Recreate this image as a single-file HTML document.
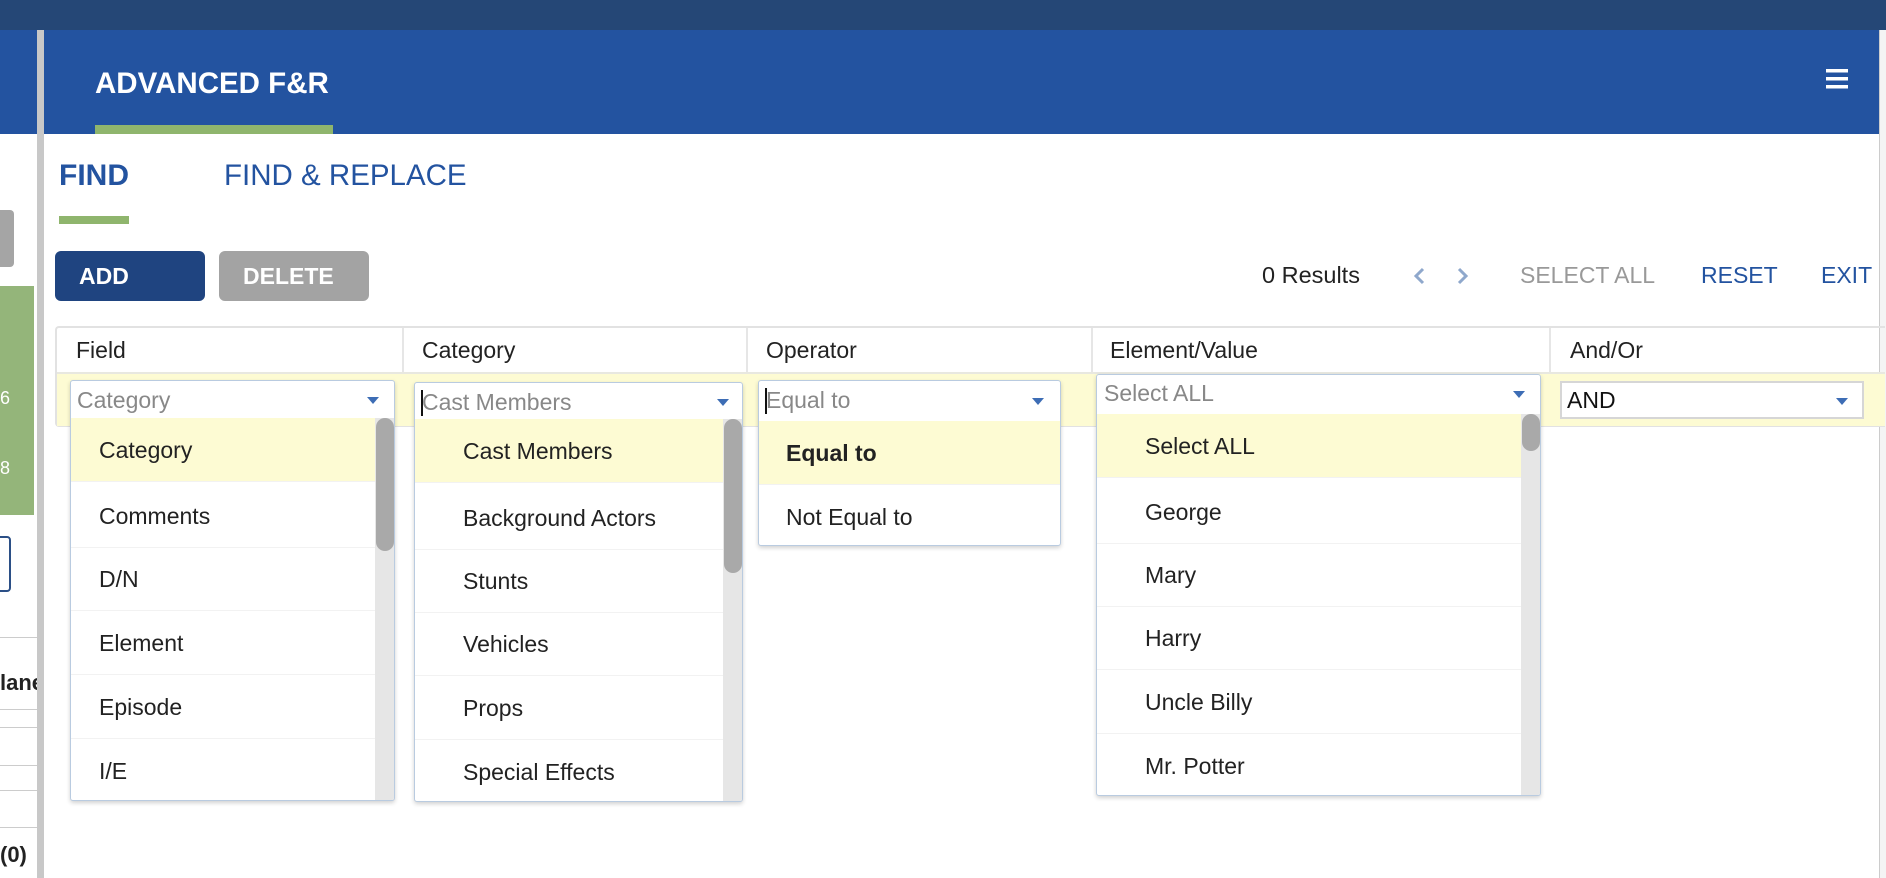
<!DOCTYPE html>
<html><head><meta charset="utf-8"><style>
*{box-sizing:border-box;margin:0;padding:0}
body{width:1886px;height:878px;overflow:hidden;background:#fff;font-family:"Liberation Sans",Arial,sans-serif;position:relative;color:#222}
.a{position:absolute}
.dd{position:absolute;background:#fff;border:1px solid #b9cbe0;border-radius:3px;box-shadow:0 2px 4px rgba(0,0,0,.18);overflow:hidden}
.it{position:absolute;left:0;height:64px;line-height:64px;font-size:23px;color:#222;border-bottom:1px solid #f2f2f2}
.sel{background:#fdfbd3}
.tri{position:absolute;width:0;height:0;border-left:6px solid transparent;border-right:6px solid transparent;border-top:7px solid #3d6db5}
.ph{position:absolute;font-size:23px;color:#888}
.hd{position:absolute;top:337px;font-size:23px;color:#222}
</style></head><body>
<div class="a" style="left:0;top:0;width:1886px;height:30px;background:#254776"></div>
<div class="a" style="left:0;top:30px;width:1879px;height:104px;background:#2353a0"></div>
<!-- left strip -->
<div class="a" style="left:0;top:210px;width:14px;height:57px;background:#a5a5a5;border-radius:0 4px 4px 0"></div>
<div class="a" style="left:0;top:286px;width:34px;height:229px;background:#94b57a"></div>
<div class="a" style="left:0;top:388px;color:#fff;font-size:18px">6</div>
<div class="a" style="left:0;top:458px;color:#fff;font-size:18px">8</div>
<div class="a" style="left:-4px;top:536px;width:15px;height:56px;border:2px solid #2b4f86;border-radius:4px"></div>
<div class="a" style="left:0;top:637px;width:37px;border-top:1px solid #ccc"></div>
<div class="a" style="left:0;top:670px;font-size:22px;font-weight:bold">lane</div>
<div class="a" style="left:0;top:709px;width:37px;border-top:1px solid #ccc"></div>
<div class="a" style="left:0;top:727px;width:37px;border-top:1px solid #ccc"></div>
<div class="a" style="left:0;top:765px;width:37px;border-top:1px solid #ccc"></div>
<div class="a" style="left:0;top:790px;width:37px;border-top:1px solid #ccc"></div>
<div class="a" style="left:0;top:827px;width:37px;border-top:1px solid #ccc"></div>
<div class="a" style="left:0;top:842px;font-size:22px;font-weight:bold">(0)</div>
<div class="a" style="left:37px;top:30px;width:7px;height:848px;background:#c8c8c8"></div>
<!-- right edge -->
<div class="a" style="left:1879px;top:30px;width:7px;height:848px;background:#f4f4f4;border-left:1px solid #ccc"></div>
<!-- header -->
<div class="a" style="left:95px;top:67px;color:#fff;font-size:29.5px;font-weight:bold">ADVANCED F&amp;R</div>
<div class="a" style="left:95px;top:125px;width:238px;height:9px;background:#8fb56d"></div>
<svg class="a" style="left:1826px;top:69px" width="22" height="20"><rect y="0" width="22" height="3.5" fill="#fff"/><rect y="8" width="22" height="3.5" fill="#fff"/><rect y="16" width="22" height="3.5" fill="#fff"/></svg>
<!-- tabs -->
<div class="a" style="left:59px;top:159px;color:#2353a0;font-size:30px;font-weight:bold">FIND</div>
<div class="a" style="left:224px;top:159px;color:#2353a0;font-size:29.5px">FIND &amp; REPLACE</div>
<div class="a" style="left:59px;top:216px;width:70px;height:8px;background:#8fb56d"></div>
<!-- buttons -->
<div class="a" style="left:55px;top:251px;width:150px;height:50px;background:#1f4480;border-radius:6px;color:#fff;font-weight:bold;font-size:23px;line-height:50px;padding-left:24px">ADD</div>
<div class="a" style="left:219px;top:251px;width:150px;height:50px;background:#a3a3a3;border-radius:6px;color:#fff;font-weight:bold;font-size:23px;line-height:50px;padding-left:24px">DELETE</div>
<div class="a" style="left:1262px;top:262px;font-size:23.5px;color:#222">0 Results</div>
<svg class="a" style="left:1411px;top:266px" width="60" height="20"><path d="M12 3 L5 10 L12 17" stroke="#8fa8cc" stroke-width="3" fill="none"/><path d="M48 3 L55 10 L48 17" stroke="#8fa8cc" stroke-width="3" fill="none"/></svg>
<div class="a" style="left:1520px;top:262px;font-size:23px;color:#999">SELECT ALL</div>
<div class="a" style="left:1701px;top:262px;font-size:23px;color:#2353a0">RESET</div>
<div class="a" style="left:1821px;top:262px;font-size:23px;color:#2353a0">EXIT</div>
<!-- table -->
<div class="a" style="left:55px;top:326px;width:1830px;height:101px;border:2px solid #e2e2e2;border-right:none;border-radius:4px 0 0 4px"></div>
<div class="a" style="left:57px;top:372px;width:1828px;height:54px;background:#fdfbd3;border-top:2px solid #e8e8e0"></div>
<div class="a" style="left:402px;top:328px;height:44px;border-left:2px solid #e6e6e6"></div>
<div class="a" style="left:746px;top:328px;height:44px;border-left:2px solid #e6e6e6"></div>
<div class="a" style="left:1091px;top:328px;height:44px;border-left:2px solid #e6e6e6"></div>
<div class="a" style="left:1549px;top:328px;height:44px;border-left:2px solid #e6e6e6"></div>
<div class="hd" style="left:76px">Field</div>
<div class="hd" style="left:422px">Category</div>
<div class="hd" style="left:766px">Operator</div>
<div class="hd" style="left:1110px">Element/Value</div>
<div class="hd" style="left:1570px">And/Or</div>
<!-- AND select -->
<div class="a" style="left:1560px;top:381px;width:304px;height:38px;background:#fff;border:2px solid #d6d6d6"></div>
<div class="a" style="left:1567px;top:387px;font-size:23px;color:#111">AND</div>
<div class="tri" style="left:1836px;top:398px"></div>
<!-- Field dropdown -->
<div class="dd" style="left:70px;top:380px;width:325px;height:421px">
 <div class="ph" style="left:6px;top:6px">Category</div><div class="tri" style="left:296px;top:16px"></div>
 <div class="it sel" style="top:37px;width:306px;padding-left:28px">Category</div>
 <div class="it" style="top:103px;width:306px;padding-left:28px">Comments</div>
 <div class="it" style="top:166px;width:306px;padding-left:28px">D/N</div>
 <div class="it" style="top:230px;width:306px;padding-left:28px">Element</div>
 <div class="it" style="top:294px;width:306px;padding-left:28px">Episode</div>
 <div class="it" style="top:358px;width:306px;padding-left:28px">I/E</div>
 <div class="a" style="left:304px;top:37px;width:20px;height:384px;background:#e6e6e6"></div>
 <div class="a" style="left:305px;top:37px;width:18px;height:133px;background:#a9a9a9;border-radius:9px"></div>
</div>
<!-- Category dropdown -->
<div class="dd" style="left:414px;top:382px;width:329px;height:420px">
 <div class="a" style="left:6px;top:7px;width:2px;height:26px;background:#111"></div>
 <div class="ph" style="left:7px;top:6px">Cast Members</div><div class="tri" style="left:302px;top:16px"></div>
 <div class="it sel" style="top:36px;width:308px;padding-left:48px">Cast Members</div>
 <div class="it" style="top:103px;width:308px;padding-left:48px">Background Actors</div>
 <div class="it" style="top:166px;width:308px;padding-left:48px">Stunts</div>
 <div class="it" style="top:229px;width:308px;padding-left:48px">Vehicles</div>
 <div class="it" style="top:293px;width:308px;padding-left:48px">Props</div>
 <div class="it" style="top:357px;width:308px;padding-left:48px">Special Effects</div>
 <div class="a" style="left:308px;top:36px;width:20px;height:384px;background:#e6e6e6"></div>
 <div class="a" style="left:309px;top:36px;width:18px;height:154px;background:#a9a9a9;border-radius:9px"></div>
</div>
<!-- Operator dropdown -->
<div class="dd" style="left:758px;top:380px;width:303px;height:166px">
 <div class="a" style="left:6px;top:7px;width:2px;height:26px;background:#111"></div>
 <div class="ph" style="left:7px;top:6px">Equal to</div><div class="tri" style="left:273px;top:17px"></div>
 <div class="it sel" style="top:40px;width:303px;padding-left:27px;font-weight:bold">Equal to</div>
 <div class="it" style="top:104px;width:303px;padding-left:27px;border:none">Not Equal to</div>
</div>
<!-- Element dropdown -->
<div class="dd" style="left:1096px;top:374px;width:445px;height:422px">
 <div class="ph" style="left:7px;top:5px">Select ALL</div><div class="tri" style="left:416px;top:16px"></div>
 <div class="it sel" style="top:39px;width:424px;padding-left:48px">Select ALL</div>
 <div class="it" style="top:105px;width:424px;padding-left:48px">George</div>
 <div class="it" style="top:168px;width:424px;padding-left:48px">Mary</div>
 <div class="it" style="top:231px;width:424px;padding-left:48px">Harry</div>
 <div class="it" style="top:295px;width:424px;padding-left:48px">Uncle Billy</div>
 <div class="it" style="top:359px;width:424px;padding-left:48px">Mr. Potter</div>
 <div class="a" style="left:424px;top:39px;width:20px;height:383px;background:#e6e6e6"></div>
 <div class="a" style="left:425px;top:39px;width:18px;height:37px;background:#a9a9a9;border-radius:9px"></div>
</div>
</body></html>
